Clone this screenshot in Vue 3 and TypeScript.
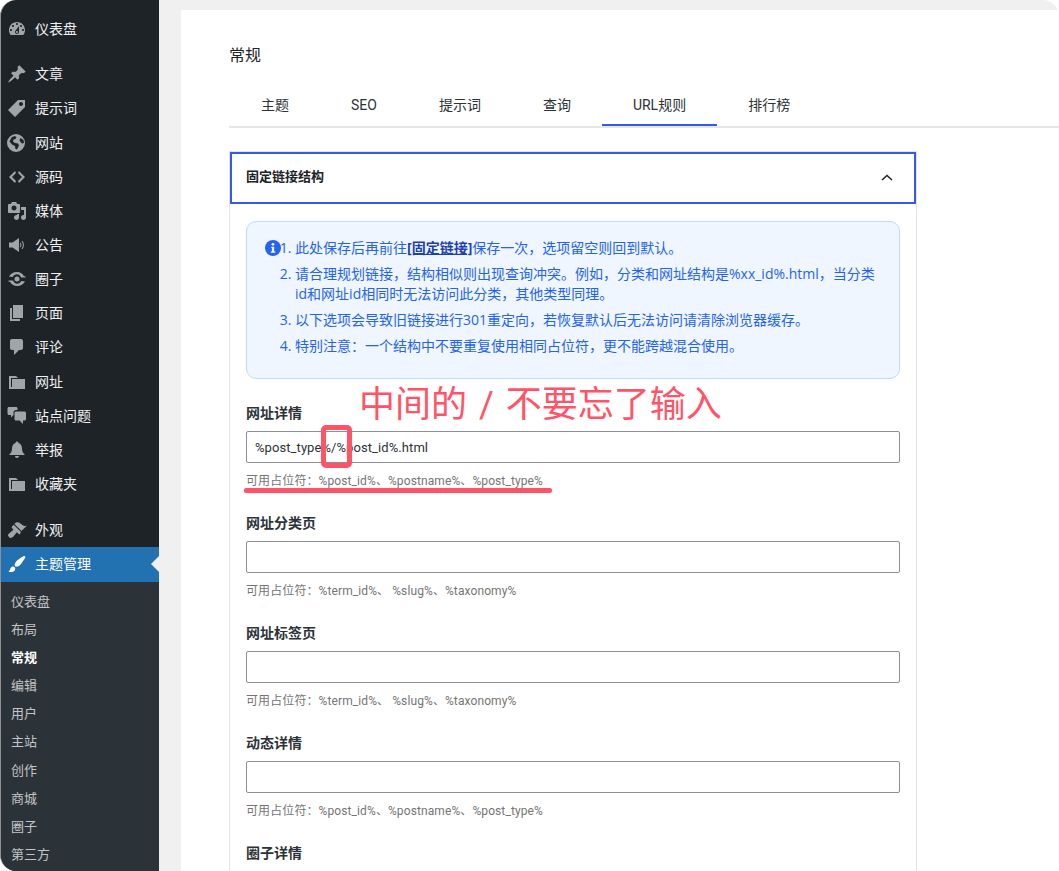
<script setup lang="ts">
interface MenuItem {
  label: string;
  icon: string;
  gapBefore?: boolean;
  active?: boolean;
}

const folder = 'M5 7h13v10H2V4h7l2 2H4v9h1V7z';

const menu: MenuItem[] = [
  { label: '文章', icon: 'M10.44 3.02l1.82-1.82 6.36 6.35-1.83 1.82c-1.05-.68-2.48-.57-3.41.36l-.75.75c-.92.93-1.04 2.35-.35 3.41l-1.83 1.82-2.41-2.41-2.8 2.79c-.42.42-3.38 2.71-3.8 2.29s1.86-3.39 2.28-3.81l2.79-2.79L4.1 9.36l1.83-1.82c1.05.69 2.48.57 3.4-.36l.75-.75c.93-.92 1.05-2.35.36-3.41z' },
  { label: '提示词', icon: 'M11 2h7v7L8 19l-7-7zm3 6c1.1 0 2-.9 2-2s-.9-2-2-2-2 .9-2 2 .9 2 2 2z' },
  { label: '网站', icon: 'M9 1a9 9 0 1 0 0 18A9 9 0 0 0 9 1zM4.500 4.500l3-1.500 2 1-1 2-2 .5-.5 2 2 1.500 3 .5 1 2-2 4-1.500-.5-.5-3-3-1.500-2.500-3zM13.500 5l3 2 .5 3-2 .5-1.500-1.500-1-2z' },
  { label: '源码', icon: 'M9 6l-4 4 4 4-1 2-6-6 6-6zm2 8l4-4-4-4 1-2 6 6-6 6z' },
  { label: '媒体', icon: 'M13 11V4c0-.55-.45-1-1-1h-1.67L9 1H5L3.67 3H2c-.55 0-1 .45-1 1v7c0 .55.45 1 1 1h10c.55 0 1-.45 1-1zM7 4.500c1.380 0 2.500 1.120 2.500 2.500S8.380 9.500 7 9.500 4.500 8.380 4.500 7 5.620 4.500 7 4.500zM14 6h5v10.500c0 1.380-1.120 2.500-2.500 2.500S14 17.880 14 16.500s1.120-2.500 2.500-2.500c.17 0 .34.02.5.05V9h-3V6zm-4 8.050V13h2v3.500c0 1.380-1.120 2.500-2.500 2.500S7 17.880 7 16.500 8.120 14 9.500 14c.17 0 .34.02.5.05z' },
  { label: '公告', icon: 'M2 7.500h3.500L12 3v14l-6.500-4.500H2zM13.500 7.500c1.200 1.400 1.200 3.600 0 5l-.7-.7c.8-1 .8-2.600 0-3.600zM15.300 5.800c2.200 2.400 2.200 6 0 8.400l-.7-.7c1.800-2 1.800-5 0-7z' },
  { label: '圈子', icon: 'M10 3c3.200 0 5.800 1.700 7 4.200h1.500v1.300H14C13.200 6.500 11.800 5.300 10 5.300 8 5.300 6.500 6.400 5.800 8L2 7.500C3.300 5 6.400 3 10 3zM10 7.500a2.500 2.500 0 1 1 0 5 2.500 2.500 0 0 1 0-5zM1.500 11.500H6c.8 2 2.200 3.200 4 3.200 2 0 3.500-1.100 4.200-2.700l3.800.5C16.700 15 13.600 17 10 17c-3.200 0-5.800-1.700-7-4.200H1.500z' },
  { label: '页面', icon: 'M6 15V2h10v13H6zm-1 1h8v2H3V5h2v11z' },
  { label: '评论', icon: 'M5 2h9c1.100 0 2 .9 2 2v7c0 1.100-.9 2-2 2h-2l-5 5v-5H5c-1.100 0-2-.9-2-2V4c0-1.100.9-2 2-2z' },
  { label: '网址', icon: folder },
  { label: '站点问题', icon: 'M2 1h7c.8 0 1.500.7 1.500 1.500V4H9C7.600 4 6.500 5.100 6.500 6.500V9L4 11.500V9H2c-.8 0-1.500-.7-1.500-1.500v-5C.5 1.700 1.200 1 2 1zM9 5.500h8.500c.8 0 1.500.7 1.500 1.500v6c0 .8-.7 1.500-1.500 1.500H16V18l-3.500-3.500H9c-.8 0-1.500-.7-1.500-1.500V7c0-.8.7-1.500 1.500-1.500z' },
  { label: '举报', icon: 'M10 1.500c.8 0 1.500.7 1.500 1.400C14 3.600 15 6 15 8.500c0 3 1 4.500 2.500 5.500v1h-15v-1C4 13 5 11.500 5 8.500 5 6 6 3.600 8.500 2.900c0-.7.7-1.400 1.500-1.400zM8 16h4c0 1.100-.9 2-2 2s-2-.9-2-2z' },
  { label: '收藏夹', icon: folder },
  { label: '外观', gapBefore: true, icon: 'M14.480 11.060L7.410 3.990l1.500-1.500c.5-.56 2.300-.47 3.510.32 1.210.8 1.430 1.280 2.910 2.100 1.180.64 2.450 1.260 4.450.85zm-.71.71L6.700 4.700 4.930 6.470c-.39.39-.39 1.020 0 1.410l1.060 1.060c.39.39.39 1.030 0 1.420-.6.6-1.430 1.110-2.210 1.690-.35.26-.7.53-1.010.84C1.430 13.230.93 15.170 1 15.620c.07.45.92 1.760 1.970 2.300.45.23 2.390-.41 3.770-1.790.31-.31.58-.66.84-1.010.58-.78 1.090-1.610 1.690-2.210.39-.39 1.030-.39 1.420 0l1.060 1.060c.39.39 1.020.39 1.410 0z' },
  { label: '主题管理', active: true, icon: 'M18.330 3.570s.27-.8-.31-1.360c-.53-.52-1.220-.24-1.220-.24-.61.3-5.760 3.470-7.670 5.570-.86.96-2.060 3.790-1.090 4.820.92.98 3.960-.17 4.790-1 2.060-2.060 5.210-7.170 5.500-7.790zM1.400 17.650c2.370-1.560 1.460-3.410 3.230-4.640.93-.65 2.220-.62 3.080.29.63.67.8 2.570-.16 3.460-1.570 1.450-4 1.550-6.150.89z' },
];

const dashboardIcon = 'M3.760 16h12.480c1.100-1.370 1.760-3.110 1.760-5 0-4.420-3.580-8-8-8s-8 3.580-8 8c0 1.890.66 3.630 1.760 5zM10 4c.55 0 1 .45 1 1s-.45 1-1 1-1-.45-1-1 .45-1 1-1zM6 6c.55 0 1 .45 1 1s-.45 1-1 1-1-.45-1-1 .45-1 1-1zm8 0c.55 0 1 .45 1 1s-.45 1-1 1-1-.45-1-1 .45-1 1-1zm-5.370 5.550L12 7v6c0 1.100-.9 2-2 2s-2-.9-2-2c0-.57.24-1.080.63-1.450zM4 10c.55 0 1 .45 1 1s-.45 1-1 1-1-.45-1-1 .45-1 1-1zm12 0c.55 0 1 .45 1 1s-.45 1-1 1-1-.45-1-1 .45-1 1-1zm-5 3c0-.55-.45-1-1-1s-1 .45-1 1 .45 1 1 1 1-.45 1-1z';

const submenu = ['仪表盘', '布局', '常规', '编辑', '用户', '主站', '创作', '商城', '圈子', '第三方'];
const tabs = ['主题', 'SEO', '提示词', '查询', 'URL规则', '排行榜'];

const postHint = '可用占位符：%post_id%、%postname%、%post_type%';
const termHint = '可用占位符：%term_id%、 %slug%、%taxonomy%';

const fields = [
  { label: '网址详情', value: '%post_type%/%post_id%.html', hint: postHint },
  { label: '网址分类页', value: '', hint: termHint },
  { label: '网址标签页', value: '', hint: termHint },
  { label: '动态详情', value: '', hint: postHint },
  { label: '圈子详情', value: '', hint: '' },
];
</script>

<template>
  <div class="shot">
    <aside class="side">
      <a class="menu-item first">
        <svg class="icon" viewBox="0 0 20 20"><path :d="dashboardIcon" fill-rule="evenodd" /></svg>
        <span>仪表盘</span>
      </a>
      <a
        v-for="item in menu"
        :key="item.label"
        class="menu-item"
        :class="{ active: item.active, spaced: item.gapBefore }"
      >
        <svg class="icon" viewBox="0 0 20 20"><path :d="item.icon" fill-rule="evenodd" /></svg>
        <span>{{ item.label }}</span>
      </a>
      <ul class="submenu">
        <li v-for="sub in submenu" :key="sub" :class="{ current: sub === '常规' }">{{ sub }}</li>
      </ul>
    </aside>

    <main class="main">
      <div class="panel">
        <h1 class="title">常规</h1>
        <nav class="tabs">
          <span v-for="tab in tabs" :key="tab" class="tab" :class="{ active: tab === 'URL规则' }">{{ tab }}</span>
        </nav>

        <section class="card">
          <header class="card-head">
            <span class="card-title">固定链接结构</span>
            <svg class="chevron" viewBox="0 0 12 7"><path d="M1 6l5-4.500L11 6" /></svg>
          </header>
          <div class="card-body">
            <div class="alert">
              <svg class="alert-icon" viewBox="0 0 16 16">
                <circle cx="8" cy="8" r="8" />
                <circle cx="8" cy="4.300" r="1.400" fill="#eff6ff" />
                <path d="M6.300 6.800h2.900v4.700h1.100v1.300H5.800v-1.300h1.100V8.100h-.6z" fill="#eff6ff" />
              </svg>
              <ol class="notes">
                <li>此处保存后再前往<a class="link">[固定链接]</a>保存一次，选项留空则回到默认。</li>
                <li>请合理规划链接，结构相似则出现查询冲突。例如，分类和网址结构是%xx_id%.html，当分类id和网址id相同时无法访问此分类，其他类型同理。</li>
                <li>以下选项会导致旧链接进行301重定向，若恢复默认后无法访问请清除浏览器缓存。</li>
                <li>特别注意：一个结构中不要重复使用相同占位符，更不能跨越混合使用。</li>
              </ol>
            </div>

            <div v-for="field in fields" :key="field.label" class="field">
              <label class="field-label">{{ field.label }}</label>
              <input class="field-input" type="text" :value="field.value" />
              <p v-if="field.hint" class="field-hint">{{ field.hint }}</p>
            </div>
          </div>
        </section>
      </div>
    </main>

    <div class="note-text">中间的 / 不要忘了输入</div>
    <div class="note-box"></div>
    <div class="note-line"></div>
  </div>
</template>

<style scoped>
.shot {
  position: relative;
  display: flex;
  width: 1059px;
  height: 871px;
  overflow: hidden;
  background: #fff;
  font-family: Roboto, "Noto Sans CJK SC", sans-serif;
  font-size: 14px;
  color: #1d2327;
}

.side {
  flex: none;
  width: 159px;
  box-sizing: border-box;
  padding-top: 12px;
  background: #1d2327;
  border-left: 1px solid #8c8f94;
  border-radius: 16px 0 0 16px;
  color: #f0f0f1;
  overflow: hidden;
}

.menu-item {
  position: relative;
  display: flex;
  align-items: center;
  gap: 8px;
  height: 34.17px;
  padding-left: 6px;
}

.menu-item span {
  padding-bottom: 2px;
}

.menu-item.first {
  margin-bottom: 11px;
}

.menu-item.spaced {
  margin-top: 12px;
}

.icon {
  flex: none;
  width: 20px;
  height: 20px;
  fill: #a0a5aa;
}

.menu-item.active {
  background: #2271b1;
  color: #fff;
}

.menu-item.active .icon {
  fill: #fff;
}

.menu-item.active::after {
  content: "";
  position: absolute;
  right: 0;
  top: 50%;
  margin-top: -8px;
  border: 8px solid transparent;
  border-right-color: #f0f0f1;
  border-left-width: 0;
}

.submenu {
  list-style: none;
  margin: 0;
  padding: 6px 0 0 10px;
  background: #2c3338;
  color: #c3c4c7;
  height: 300px;
}

.submenu li {
  height: 28.2px;
  line-height: 28.2px;
  font-size: 13px;
}

.submenu li.current {
  color: #fff;
  font-weight: 700;
}

.main {
  flex: 1;
  min-width: 0;
  padding: 10px 0 0 22px;
  background: #f0f0f1;
  border-radius: 0 16px 0 0;
}

.panel {
  height: 100%;
  box-sizing: border-box;
  padding: 33px 0 0 48px;
  background: #fff;
}

.title {
  margin: 0;
  height: 23px;
  font-size: 16px;
  font-weight: 400;
  line-height: 25px;
}

.tabs {
  display: flex;
  height: 37px;
  margin-top: 25px;
  padding-left: 1px;
  box-sizing: border-box;
  border-bottom: 2px solid #e6e6e9;
}

.tab {
  height: 35px;
  box-sizing: border-box;
  padding: 0 31px;
  line-height: 28px;
  font-size: 14px;
  color: #2c3338;
}

.tab.active {
  border-bottom: 2px solid #3858e9;
}

.card {
  width: 688px;
  box-sizing: border-box;
  margin-top: 23px;
  border: 1px solid #e4e4e7;
}

.card-head {
  display: flex;
  align-items: center;
  justify-content: space-between;
  height: 52px;
  box-sizing: border-box;
  padding: 0 21px 2px 14px;
  border: 2px solid #3858e9;
  font-size: 13px;
  font-weight: 700;
}

.card-title {
  padding-bottom: 3px;
}

.chevron {
  width: 12px;
  height: 7px;
  fill: none;
  stroke: #1d2327;
  stroke-width: 1.500;
}

.card-body {
  padding: 17px 16px 0;
}

.alert {
  display: flex;
  box-sizing: border-box;
  height: 158px;
  padding: 16px 20px 22px 18px;
  background: #eff6ff;
  border: 1px solid #bfdbfe;
  border-radius: 10px;
  color: #2563eb;
  font-family: "Open Sans", "Noto Sans CJK SC", sans-serif;
  font-size: 14px;
  line-height: 20px;
}

.alert-icon {
  flex: none;
  width: 16px;
  height: 16px;
  margin-top: 2px;
  fill: #2563eb;
}

.notes {
  margin: 0;
  padding: 0 0 0 14px;
}

.notes li + li {
  margin-top: 6px;
}

.link {
  color: #1e40af;
  font-weight: 700;
  text-decoration: underline;
}

.field {
  margin-top: 24px;
  height: 86px;
}

.field-label {
  display: block;
  height: 20px;
  margin-bottom: 8px;
  font-size: 14px;
  font-weight: 700;
  line-height: 20px;
  color: #2c3338;
}

.field-input {
  display: block;
  width: 100%;
  height: 32px;
  box-sizing: border-box;
  padding: 0 8px;
  border: 1px solid #8c8f94;
  border-radius: 2px;
  background: #fff;
  font: inherit;
  font-size: 13px;
  letter-spacing: 0.08px;
  color: #2c3338;
}

.field-hint {
  margin: 9px 0 0;
  font-size: 12px;
  letter-spacing: 0.1px;
  line-height: 18px;
  color: #757575;
}

.note-text {
  position: absolute;
  left: 359px;
  top: 380px;
  font-size: 36px;
  font-weight: 400;
  word-spacing: 3px;
  line-height: 50px;
  color: #ff5468;
  white-space: nowrap;
}

.note-box {
  position: absolute;
  left: 321px;
  top: 425px;
  width: 31px;
  height: 43px;
  box-sizing: border-box;
  border: 5px solid #ff5468;
  border-radius: 5px;
}

.note-line {
  position: absolute;
  left: 244px;
  top: 488px;
  width: 308px;
  height: 5px;
  border-radius: 2px;
  background: #ff5468;
}
</style>
